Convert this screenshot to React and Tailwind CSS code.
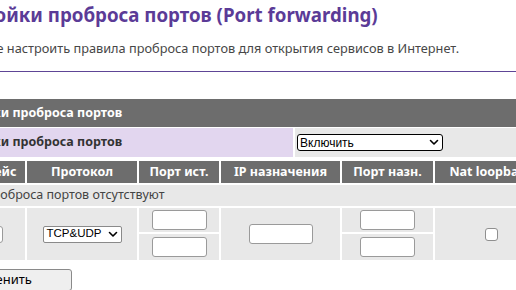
function Chevron() {
  return (
    <svg width="10" height="7" viewBox="0 0 10 7" fill="none">
      <path d="M1.5 1.5 L5 5 L8.5 1.5" stroke="#000" strokeWidth="1.6" strokeLinecap="round" strokeLinejoin="round" />
    </svg>
  );
}

function TextInput({ w }) {
  return (
    <input
      type="text"
      className={`${w} bg-white border border-[#9a9a9a] rounded-[3px] outline-none`}
    />
  );
}

export default function App() {
  const headers = ["Интерфейс", "Протокол", "Порт ист.", "IP назначения", "Порт назн.", "Nat loopback"];
  return (
    <div className="w-[516px] h-[290px] overflow-hidden bg-white font-['Noto_Sans',sans-serif]">
      <div className="ml-[-64px] w-[620px]">
        <h1 className="pl-[2px] text-[18.7px] leading-[30px] font-bold text-[#5b3b97] whitespace-nowrap">
          Настройки проброса портов (Port forwarding)
        </h1>
        <p className="mt-[8px] text-[12.75px] leading-[20px] text-[#474747] whitespace-nowrap">
          Вы можете настроить правила проброса портов для открытия сервисов в Интернет.
        </p>
        <div className="mt-[13px] h-px bg-[#5e4596]" />

        <div className="mt-[27px] h-[28px] bg-[#6d6d6d] flex items-center pl-[3px] text-[12.5px] font-bold text-white whitespace-nowrap">
          Настройки проброса портов
        </div>

        <div className="mt-px flex gap-[2px] h-[29px]">
          <div className="w-[357px] bg-[#e2d6ef] flex items-center pl-[3px] text-[12.5px] font-bold text-[#333] whitespace-nowrap">
            Настройки проброса портов
          </div>
          <div className="flex-1 bg-[#e8e8e8] flex items-center pl-[2px]">
            <div className="w-[146px] h-[17px] bg-white border border-black rounded-[3px] flex items-center justify-between pl-[2px] pr-[3px] font-['Liberation_Sans',sans-serif] text-[12px] text-black">
              <span>Включить</span>
              <Chevron />
            </div>
          </div>
        </div>

        <div className="mt-[4px] grid grid-cols-[89px_110px_80px_119px_91px_112px_40px] gap-x-[2px]">
          {headers.map((h) => (
            <div
              key={h}
              className="h-[22px] bg-[#6d6d6d] flex items-center justify-center text-[12.5px] font-bold text-white whitespace-nowrap"
            >
              {h}
            </div>
          ))}
          <div className="h-[22px] bg-[#6d6d6d]" />
        </div>

        <div className="mt-[2px] h-[21px] bg-[#e8e8e8] flex items-center text-[12.5px] text-[#444] whitespace-nowrap">
          <span className="ml-[-7px]">Правила проброса портов отсутствуют</span>
        </div>

        <div className="mt-[2px] grid grid-cols-[89px_110px_80px_119px_91px_112px_40px] grid-rows-[24px_26px] gap-[2px]">
          <div className="row-span-2 bg-[#e8e8e8] flex items-center justify-center">
            <TextInput w="w-[45px] h-[17px]" />
          </div>
          <div className="row-span-2 bg-[#e8e8e8] flex items-center justify-center">
            <div className="w-[79px] h-[17px] bg-white border border-[#8a8a8a] rounded-[2px] flex items-center justify-between pl-[3px] pr-[3px] font-['Liberation_Sans',sans-serif] text-[11.5px] text-black">
              <span>TCP&amp;UDP</span>
              <Chevron />
            </div>
          </div>
          <div className="bg-[#e8e8e8] flex items-center justify-center">
            <TextInput w="w-[55px] h-[20px]" />
          </div>
          <div className="row-span-2 bg-[#e8e8e8] flex items-center justify-center">
            <TextInput w="w-[64px] h-[20px]" />
          </div>
          <div className="bg-[#e8e8e8] flex items-center justify-center">
            <TextInput w="w-[55px] h-[20px]" />
          </div>
          <div className="row-span-2 bg-[#e8e8e8] flex items-center justify-center">
            <div className="w-[13px] h-[13px] bg-white border border-[#8f8f8f] rounded-[3px]" />
          </div>
          <div className="row-span-2 bg-[#e8e8e8]" />
          <div className="bg-[#e8e8e8] flex items-center justify-center">
            <TextInput w="w-[55px] h-[20px]" />
          </div>
          <div className="bg-[#e8e8e8] flex items-center justify-center">
            <TextInput w="w-[55px] h-[20px]" />
          </div>
        </div>

        <button className="mt-[9px] w-[136px] h-[22px] bg-[#efefef] border border-[#8a8a8a] rounded-[3px] text-[13px] text-black flex items-center justify-start pl-[23px]">
          Применить
        </button>
      </div>
    </div>
  );
}
